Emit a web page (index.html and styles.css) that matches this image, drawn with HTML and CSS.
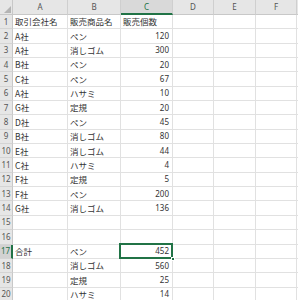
FILE: index.html
```html
<!DOCTYPE html>
<html lang="ja">
<head>
<meta charset="utf-8">
<link rel="stylesheet" href="styles.css">
</head>
<body>
<div class="sheet">
  <div class="corner"></div><div class="ch">A</div><div class="ch">B</div><div class="ch on">C</div><div class="ch">D</div><div class="ch">E</div><div class="ch">F</div><div class="ch"></div>

  <div class="rh">1</div><div class="c">取引会社名</div><div class="c">販売商品名</div><div class="c">販売個数</div><div class="c"></div><div class="c"></div><div class="c"></div><div class="c"></div>
  <div class="rh">2</div><div class="c">A社</div><div class="c">ペン</div><div class="c n">120</div><div class="c"></div><div class="c"></div><div class="c"></div><div class="c"></div>
  <div class="rh">3</div><div class="c">A社</div><div class="c">消しゴム</div><div class="c n">300</div><div class="c"></div><div class="c"></div><div class="c"></div><div class="c"></div>
  <div class="rh">4</div><div class="c">B社</div><div class="c">ペン</div><div class="c n">20</div><div class="c"></div><div class="c"></div><div class="c"></div><div class="c"></div>
  <div class="rh">5</div><div class="c">C社</div><div class="c">ペン</div><div class="c n">67</div><div class="c"></div><div class="c"></div><div class="c"></div><div class="c"></div>
  <div class="rh">6</div><div class="c">A社</div><div class="c">ハサミ</div><div class="c n">10</div><div class="c"></div><div class="c"></div><div class="c"></div><div class="c"></div>
  <div class="rh">7</div><div class="c">G社</div><div class="c">定規</div><div class="c n">20</div><div class="c"></div><div class="c"></div><div class="c"></div><div class="c"></div>
  <div class="rh">8</div><div class="c">D社</div><div class="c">ペン</div><div class="c n">45</div><div class="c"></div><div class="c"></div><div class="c"></div><div class="c"></div>
  <div class="rh">9</div><div class="c">B社</div><div class="c">消しゴム</div><div class="c n">80</div><div class="c"></div><div class="c"></div><div class="c"></div><div class="c"></div>
  <div class="rh">10</div><div class="c">E社</div><div class="c">消しゴム</div><div class="c n">44</div><div class="c"></div><div class="c"></div><div class="c"></div><div class="c"></div>
  <div class="rh">11</div><div class="c">C社</div><div class="c">ハサミ</div><div class="c n">4</div><div class="c"></div><div class="c"></div><div class="c"></div><div class="c"></div>
  <div class="rh">12</div><div class="c">F社</div><div class="c">定規</div><div class="c n">5</div><div class="c"></div><div class="c"></div><div class="c"></div><div class="c"></div>
  <div class="rh">13</div><div class="c">F社</div><div class="c">ペン</div><div class="c n">200</div><div class="c"></div><div class="c"></div><div class="c"></div><div class="c"></div>
  <div class="rh">14</div><div class="c">G社</div><div class="c">消しゴム</div><div class="c n">136</div><div class="c"></div><div class="c"></div><div class="c"></div><div class="c"></div>
  <div class="rh">15</div><div class="c"></div><div class="c"></div><div class="c"></div><div class="c"></div><div class="c"></div><div class="c"></div><div class="c"></div>
  <div class="rh">16</div><div class="c"></div><div class="c"></div><div class="c"></div><div class="c"></div><div class="c"></div><div class="c"></div><div class="c"></div>
  <div class="rh on">17</div><div class="c">合計</div><div class="c">ペン</div><div class="c n sel">452<span class="handle"></span></div><div class="c"></div><div class="c"></div><div class="c"></div><div class="c"></div>
  <div class="rh">18</div><div class="c"></div><div class="c">消しゴム</div><div class="c n">560</div><div class="c"></div><div class="c"></div><div class="c"></div><div class="c"></div>
  <div class="rh">19</div><div class="c"></div><div class="c">定規</div><div class="c n">25</div><div class="c"></div><div class="c"></div><div class="c"></div><div class="c"></div>
  <div class="rh">20</div><div class="c"></div><div class="c">ハサミ</div><div class="c n">14</div><div class="c"></div><div class="c"></div><div class="c"></div><div class="c"></div>
</div>
</body>
</html>
```

FILE: styles.css
```css
html, body {
  margin: 0;
  padding: 0;
  background: #ffffff;
}
.sheet {
  display: grid;
  grid-template-columns: 13px 55px 53px 52px 41px 42px 41px 1fr;
  grid-template-rows: 15px;
  grid-auto-rows: 14.35px;
  width: 298px;
  height: 300px;
  overflow: hidden;
  font-family: "Noto Sans CJK JP", "Noto Sans", sans-serif;
  font-size: 8.5px;
  color: #333333;
}
.sheet > div {
  box-sizing: border-box;
  border-right: 1px solid #e1e1e1;
  border-bottom: 1px solid #e1e1e1;
  display: flex;
  align-items: center;
  white-space: nowrap;
  overflow: visible;
  line-height: 1;
  min-width: 0;
}
.corner {
  background: #e6e6e6;
  position: relative;
  border-right-color: #c8c8c8 !important;
  border-bottom-color: #c8c8c8 !important;
}
.corner::after {
  content: "";
  position: absolute;
  right: 1px;
  bottom: 1px;
  border-left: 7px solid transparent;
  border-bottom: 7px solid #b4b4b4;
}
.ch {
  background: #e6e6e6;
  justify-content: center;
  color: #555555;
  font-family: "Noto Sans", sans-serif;
  font-size: 8px;
  border-right-color: #cfcfcf !important;
  border-bottom-color: #c8c8c8 !important;
}
.ch.on {
  background: #d9d9d9;
  color: #217346;
  border-bottom: 2px solid #217346 !important;
}
.rh {
  background: #e6e6e6;
  justify-content: center;
  color: #555555;
  font-family: "Noto Sans", sans-serif;
  font-size: 8px;
  border-right-color: #c8c8c8 !important;
  border-bottom-color: #d4d4d4 !important;
}
.rh.on {
  background: #d2d2d2;
  color: #217346;
  border-right: 2px solid #217346 !important;
}
.c {
  padding-left: 2px;
  background: #ffffff;
}
.c.n {
  justify-content: flex-end;
  padding-left: 0;
  padding-right: 3px;
  font-family: "Noto Sans", sans-serif;
  font-size: 8px;
}
.sel {
  position: relative;
}
.sel::after {
  content: "";
  position: absolute;
  left: -2px;
  top: -2px;
  right: -1px;
  bottom: -1px;
  border: 2px solid #217346;
}
.handle {
  position: absolute;
  right: -3px;
  bottom: -3px;
  width: 4px;
  height: 4px;
  background: #217346;
  border: 1px solid #ffffff;
  box-sizing: border-box;
  z-index: 2;
}
```
